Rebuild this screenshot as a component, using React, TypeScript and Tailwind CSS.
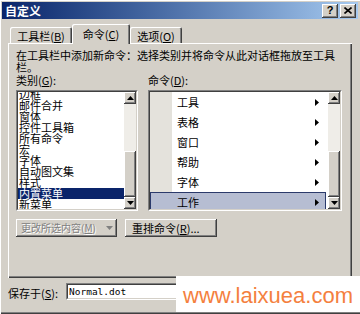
import React from "react";

function UpArrow() {
  return (
    <svg width="7" height="4" viewBox="0 0 7 4">
      <polygon points="3.5,0 7,4 0,4" fill="#000" />
    </svg>
  );
}
function DownArrow({ color = "#000" }: { color?: string }) {
  return (
    <svg width="7" height="4" viewBox="0 0 7 4">
      <polygon points="0,0 7,0 3.5,4" fill={color} />
    </svg>
  );
}
function RightArrow() {
  return (
    <svg width="4" height="7" viewBox="0 0 4 7">
      <polygon points="0,0 4,3.5 0,7" fill="#000" />
    </svg>
  );
}

function ScrollBar() {
  return (
    <div className="w-[12px] h-full flex flex-col shrink-0">
      <div className="h-[12px] bg-[#d4d0c8] shadow-[inset_-1px_-1px_#404040,inset_1px_1px_#ffffff,inset_-2px_-2px_#808080] flex items-center justify-center">
        <UpArrow />
      </div>
      <div className="flex-1 bg-[#efede8] flex flex-col justify-end">
        <div className="h-[46px] bg-[#d4d0c8] shadow-[inset_-1px_-1px_#404040,inset_1px_1px_#ffffff,inset_-2px_-2px_#808080]" />
      </div>
      <div className="h-[12px] bg-[#d4d0c8] shadow-[inset_-1px_-1px_#404040,inset_1px_1px_#ffffff,inset_-2px_-2px_#808080] flex items-center justify-center">
        <DownArrow />
      </div>
    </div>
  );
}

function ListFrame({ width, children }: { width: string; children: React.ReactNode }) {
  return (
    <div className={`${width} h-[121px] border border-t-[#808080] border-l-[#808080] border-r-white border-b-white flex`}>
      <div className="flex-1 border border-t-[#404040] border-l-[#404040] border-r-[#d4d0c8] border-b-[#d4d0c8] bg-white flex overflow-hidden">
        {children}
      </div>
    </div>
  );
}

const categories = ["边框", "邮件合并", "窗体", "控件工具箱", "所有命令", "宏", "字体", "自动图文集", "样式", "内置菜单", "新菜单"];
const commands = ["工具", "表格", "窗口", "帮助", "字体", "工作"];

export default function App() {
  return (
    <div className="w-[360px] h-[314px] relative overflow-hidden bg-[#d4d0c8] font-['Noto_Sans_CJK_SC',sans-serif] text-black shadow-[inset_1px_1px_#ffffff,inset_0_-1px_#404040,inset_0_-2px_#808080]">
      {/* Title bar */}
      <div className="mx-[2px] mt-[2px] h-[17px] bg-gradient-to-r from-[#0a246a] to-[#a6caf0] flex items-center pl-[3px] pr-[2px]">
        <span className="text-white font-bold text-[12px] leading-[14px] flex-1">自定义</span>
        <div className="flex gap-[2px]">
          <div className="w-[16px] h-[14px] bg-[#d4d0c8] shadow-[inset_-1px_-1px_#404040,inset_1px_1px_#ffffff,inset_-2px_-2px_#808080] flex items-center justify-center">
            <span className="font-['Liberation_Sans',sans-serif] font-bold text-[11px] leading-[11px]">?</span>
          </div>
          <div className="w-[16px] h-[14px] bg-[#d4d0c8] shadow-[inset_-1px_-1px_#404040,inset_1px_1px_#ffffff,inset_-2px_-2px_#808080] flex items-center justify-center">
            <svg width="8" height="7" viewBox="0 0 8 7">
              <path d="M0.5 0.5 L7.5 6.5 M7.5 0.5 L0.5 6.5" stroke="#000" strokeWidth="1.6" />
            </svg>
          </div>
        </div>
      </div>

      {/* Tabs */}
      <div className="mt-[5px] h-[20px] pl-[10px] flex items-end relative z-10 -mb-[1px]">
        <div className="w-[62px] h-[16px] mb-[1px] rounded-t-[2px] shadow-[inset_1px_1px_#ffffff,inset_-1px_0_#404040,inset_-2px_0_#808080] flex items-center justify-center text-[11px] leading-[12px] pt-[2px]">
          工具栏(<span className="underline">B</span>)
        </div>
        <div className="w-[58px] h-[20px] rounded-t-[2px] bg-[#d4d0c8] shadow-[inset_1px_1px_#ffffff,inset_-1px_0_#404040,inset_-2px_0_#808080] flex items-start justify-center text-[11px] leading-[12px] pt-[4px]">
          命令(<span className="underline">C</span>)
        </div>
        <div className="w-[52px] h-[16px] mb-[1px] rounded-t-[2px] shadow-[inset_1px_1px_#ffffff,inset_-1px_0_#404040,inset_-2px_0_#808080] flex items-center justify-center text-[11px] leading-[12px] pt-[2px]">
          选项(<span className="underline">O</span>)
        </div>
      </div>

      {/* Panel */}
      <div className="mx-[8px] w-[344px] h-[235px] shadow-[inset_1px_1px_#ffffff,inset_-1px_-1px_#404040,inset_-2px_-2px_#808080] px-[8px] pt-[6px] flex flex-col">
        <div className="text-[11px] leading-[12px] whitespace-nowrap">
          <div>在工具栏中添加新命令：选择类别并将命令从此对话框拖放至工具</div>
          <div>栏。</div>
        </div>
        <div className="mt-[1px] flex text-[11px] leading-[12px]">
          <div className="w-[132px]">类别(<span className="underline">G</span>):</div>
          <div>命令(<span className="underline">D</span>):</div>
        </div>
        <div className="mt-[4px] flex gap-[10px]">
          <ListFrame width="w-[122px]">
            <div className="flex-1 overflow-hidden">
              <div className="-mt-[3px] flex flex-col">
                {categories.map((c) => (
                  <div
                    key={c}
                    className={
                      c === "内置菜单"
                        ? "h-[11px] text-[11px] leading-[11px] pl-[1px] bg-[#0a246a] text-white whitespace-nowrap"
                        : "h-[11px] text-[11px] leading-[11px] pl-[1px] whitespace-nowrap"
                    }
                  >
                    {c}
                  </div>
                ))}
              </div>
            </div>
            <ScrollBar />
          </ListFrame>
          <ListFrame width="w-[194px]">
            <div className="flex-1 overflow-hidden flex flex-col bg-[linear-gradient(to_right,#e4e2dc_0px,#e4e2dc_22px,#ffffff_22px)]">
              {commands.map((c) => (
                <div
                  key={c}
                  className={
                    c === "工作"
                      ? "h-[20px] shrink-0 flex items-center pl-[26px] pr-[6px] mr-[2px] bg-[#b6bdd2] border border-[#2b3a6b] text-[11px] leading-[12px]"
                      : "h-[20px] shrink-0 flex items-center pl-[27px] pr-[7px] mr-[2px] text-[11px] leading-[12px]"
                  }
                >
                  <span className="flex-1">{c}</span>
                  <RightArrow />
                </div>
              ))}
            </div>
            <ScrollBar />
          </ListFrame>
        </div>
        <div className="mt-[8px] flex gap-[8px]">
          <div className="w-[101px] h-[18px] bg-[#d4d0c8] shadow-[inset_-1px_-1px_#404040,inset_1px_1px_#ffffff,inset_-2px_-2px_#808080] flex items-center pl-[5px] pr-[4px] text-[10px] leading-[12px] text-[#808080] [text-shadow:1px_1px_#ffffff]">
            <span className="flex-1 whitespace-nowrap">更改所选内容(<span className="underline">M</span>)</span>
            <DownArrow color="#808080" />
          </div>
          <div className="w-[92px] h-[18px] bg-[#d4d0c8] shadow-[inset_-1px_-1px_#404040,inset_1px_1px_#ffffff,inset_-2px_-2px_#808080] flex items-center pl-[7px] text-[11px] leading-[12px] whitespace-nowrap">
            重排命令(<span className="underline">R</span>)...
          </div>
        </div>
      </div>

      {/* Save location */}
      <div className="mt-[5px] flex items-center pl-[8px]">
        <div className="w-[58px] text-[11px] leading-[12px] pt-[3px] whitespace-nowrap">
          保存于(<span className="underline">S</span>):
        </div>
        <div className="w-[200px] h-[17px] bg-white border border-t-[#808080] border-l-[#808080] border-r-white border-b-white">
          <div className="h-full border border-t-[#404040] border-l-[#404040] border-r-[#d4d0c8] border-b-[#d4d0c8] flex items-center pl-[1px] font-['DejaVu_Sans_Mono',monospace] text-[9.5px] leading-[11px]">
            Normal.dot
          </div>
        </div>
      </div>

      {/* Watermark overlay */}
      <div className="absolute left-[176px] top-[276px] w-[184px] h-[36px] bg-white pl-[7px] pt-[8px]">
        <span className="font-['Liberation_Sans',Arial,sans-serif] text-[22px] leading-[22px] text-[#f4803e] whitespace-nowrap">
          www.laixuea.com
        </span>
      </div>
    </div>
  );
}
